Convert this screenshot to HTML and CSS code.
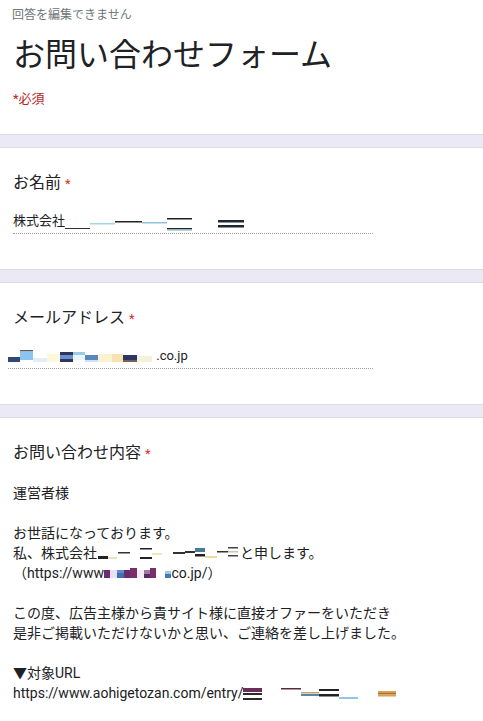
FILE: index.html
```html
<!DOCTYPE html>
<html lang="ja">
<head>
    <meta charset="UTF-8">
    <meta name="viewport" content="width=device-width, initial-scale=1.0">
    <title>お問い合わせフォーム</title>
    <link rel="stylesheet" href="styles.css">
</head>
<body>
    <div class="form-header">
        <div class="note">回答を編集できません</div>
        <h1 class="title">お問い合わせフォーム</h1>
        <div class="required">*必須</div>
    </div>

    <div class="band"></div>

    <div class="question">
        <div class="label">お名前 <span class="star">*</span></div>
        <div class="answer">株式会社<svg class="mask" width="180" height="18" viewBox="0 0 180 18">
            <rect x="0" y="15" width="25" height="1" fill="#333"/>
            <rect x="25" y="10" width="25" height="1.5" fill="#a8d4ea"/>
            <rect x="50" y="8" width="27" height="1.5" fill="#222"/>
            <rect x="77" y="9" width="25" height="1.5" fill="#8fc3e0"/>
            <rect x="102" y="5" width="25" height="1.5" fill="#222"/>
            <rect x="102" y="15" width="25" height="1.5" fill="#222"/>
            <rect x="102" y="16.5" width="25" height="1.5" fill="#b0d4e6"/>
            <rect x="153" y="7" width="26" height="2.5" fill="#1d2a36"/>
            <rect x="153" y="12" width="26" height="2.5" fill="#1d2a36"/>
        </svg></div>
    </div>

    <div class="band"></div>

    <div class="question">
        <div class="label">メールアドレス <span class="star">*</span></div>
        <div class="answer email"><svg class="mask" width="145" height="14" viewBox="0 0 145 14">
            <rect x="0" y="7" width="12" height="5" fill="#2d4a73"/>
            <rect x="12" y="0" width="13" height="1.5" fill="#5a5a5a"/>
            <rect x="12" y="1.5" width="13" height="8.5" fill="#8cc4f0"/>
            <rect x="25" y="8" width="14" height="4" fill="#e3eef8"/>
            <rect x="39" y="4" width="13" height="8" fill="#fdf8dc"/>
            <rect x="52" y="2" width="13" height="3" fill="#2d3560"/>
            <rect x="52" y="5" width="13" height="4" fill="#6b8fc7"/>
            <rect x="52" y="9" width="13" height="3" fill="#2d3560"/>
            <rect x="65" y="2" width="12" height="3" fill="#9ccbe8"/>
            <rect x="65" y="5" width="12" height="5" fill="#eaf4fb"/>
            <rect x="77" y="5" width="13" height="5" fill="#5b86bf"/>
            <rect x="77" y="10" width="13" height="2" fill="#cfe2f2"/>
            <rect x="90" y="4" width="14" height="8" fill="#fbf2d0"/>
            <rect x="104" y="4" width="11" height="8" fill="#f7e3b0"/>
            <rect x="115" y="5" width="14" height="5" fill="#2c3566"/>
            <rect x="115" y="10" width="14" height="2" fill="#7a6050"/>
            <rect x="129" y="6" width="15" height="6" fill="#f4f1dc"/>
        </svg> .co.jp</div>
    </div>

    <div class="band"></div>

    <div class="question last">
        <div class="label">お問い合わせ内容 <span class="star">*</span></div>
        <div class="message">
            <p>運営者様</p>
            <p class="blank"></p>
            <p>お世話になっております。</p>
            <p>私、株式会社<svg class="mask" width="143" height="14" viewBox="0 0 143 14">
                <rect x="1" y="9" width="10" height="3" fill="#222"/>
                <rect x="11" y="10" width="9" height="2" fill="#f0e0c0"/>
                <rect x="21" y="5" width="12" height="1.5" fill="#333"/>
                <rect x="43" y="1" width="12" height="1.5" fill="#222"/>
                <rect x="43" y="10" width="12" height="2" fill="#222"/>
                <rect x="55" y="6" width="10" height="2" fill="#f3e6b0"/>
                <rect x="76" y="5" width="12" height="2" fill="#333"/>
                <rect x="88" y="4" width="10" height="2" fill="#333"/>
                <rect x="98" y="1" width="10" height="4" fill="#4a7a9a"/>
                <rect x="98" y="7" width="10" height="2.5" fill="#222"/>
                <rect x="108" y="9" width="12" height="2" fill="#f0d8a0"/>
                <rect x="120" y="4" width="11" height="1.5" fill="#333"/>
                <rect x="131" y="0" width="10" height="1.5" fill="#444"/>
                <rect x="131" y="4" width="10" height="1.5" fill="#b8cfa8"/>
                <rect x="131" y="8" width="10" height="1.5" fill="#444"/>
            </svg>と申します。</p>
            <p>（https://www<svg class="mask" width="58" height="12" viewBox="0 0 58 12">
                <rect x="0" y="2" width="6" height="8" fill="#6b2d6e"/>
                <rect x="6" y="2" width="7" height="8" fill="#e8e0f0"/>
                <rect x="13" y="2" width="7" height="3" fill="#5a8fc8"/>
                <rect x="13" y="5" width="7" height="5" fill="#3d72b0"/>
                <rect x="20" y="2" width="6" height="8" fill="#6b2d6e"/>
                <rect x="26" y="0" width="7" height="10" fill="#7a2f6a"/>
                <rect x="33" y="2" width="7" height="8" fill="#f4eef4"/>
                <rect x="40" y="2" width="6" height="4" fill="#9a7aa0"/>
                <rect x="40" y="6" width="6" height="4" fill="#5b2a60"/>
                <rect x="46" y="0" width="6" height="10" fill="#7b2d6e"/>
            </svg> <svg class="mask" width="6" height="12" viewBox="0 0 6 12">
                <rect x="0" y="3" width="6" height="3" fill="#9fc7ea"/>
                <rect x="0" y="6" width="6" height="4" fill="#3f7bb5"/>
            </svg>co.jp/）</p>
            <p class="blank"></p>
            <p>この度、広告主様から貴サイト様に直接オファーをいただき</p>
            <p>是非ご掲載いただけないかと思い、ご連絡を差し上げました。</p>
            <p class="blank"></p>
            <p>▼対象URL</p>
            <p>https://www.aohigetozan.com/entry/<svg class="mask" width="155" height="14" viewBox="0 0 155 14">
                <rect x="0" y="1" width="19" height="4" fill="#6b2d5a"/>
                <rect x="0" y="6" width="19" height="2" fill="#2b2b2b"/>
                <rect x="0" y="11" width="19" height="2" fill="#2b2b2b"/>
                <rect x="38" y="1" width="20" height="1.5" fill="#5a2a40"/>
                <rect x="58" y="5" width="18" height="1.5" fill="#c4a070"/>
                <rect x="58" y="7" width="18" height="2" fill="#5a86a8"/>
                <rect x="76" y="2" width="20" height="2" fill="#222"/>
                <rect x="76" y="7" width="20" height="2.5" fill="#222"/>
                <rect x="96" y="10" width="19" height="2" fill="#8ec7e8"/>
                <rect x="135" y="4" width="18" height="2" fill="#d8a050"/>
                <rect x="135" y="6" width="18" height="1.5" fill="#a87030"/>
                <rect x="135" y="7.5" width="18" height="2" fill="#d8a050"/>
            </svg></p>
        </div>
    </div>
</body>
</html>
```

FILE: styles.css
```css
/* Page */
body {
    font-family: Roboto, "Noto Sans CJK JP", sans-serif;
    color: #202124;
    background-color: #ffffff;
    margin: 0;
}

/* Form title block */
.form-header {
    padding: 5px 13px 25px 12px;
}

.note {
    font-size: 12px;
    line-height: 20px;
    color: #70757a;
}

.title {
    font-size: 32px;
    line-height: 40px;
    font-weight: 400;
    margin: 10px 0 0 1px;
    color: #202124;
}

.required {
    font-size: 13px;
    line-height: 20px;
    color: #b3261e;
    margin: 14px 0 0 1px;
}

/* Lavender divider between questions */
.band {
    height: 12px;
    background-color: #ece9f7;
    border-top: 1px solid #dadce0;
    border-bottom: 1px solid #dadce0;
}

/* Question blocks */
.question {
    padding: 24px 13px 35px 13px;
}

.question.last {
    padding-bottom: 20px;
}

.label {
    font-size: 16px;
    line-height: 22px;
}

.star {
    color: #d93025;
    font-size: 13px;
}

.answer {
    width: 360px;
    margin-top: 16px;
    font-size: 13px;
    line-height: 20px;
    padding-bottom: 2px;
    border-bottom: 1px dotted #9aa0a6;
    white-space: nowrap;
}

.answer.email {
    margin-left: -5px;
    padding-left: 0;
    width: 365px;
}

.mask {
    vertical-align: middle;
}

/* Long answer text */
.message {
    margin-top: 18px;
    font-size: 14px;
    line-height: 20px;
}

.message p {
    margin: 0;
    white-space: nowrap;
}

.message .blank {
    height: 20px;
}
```
